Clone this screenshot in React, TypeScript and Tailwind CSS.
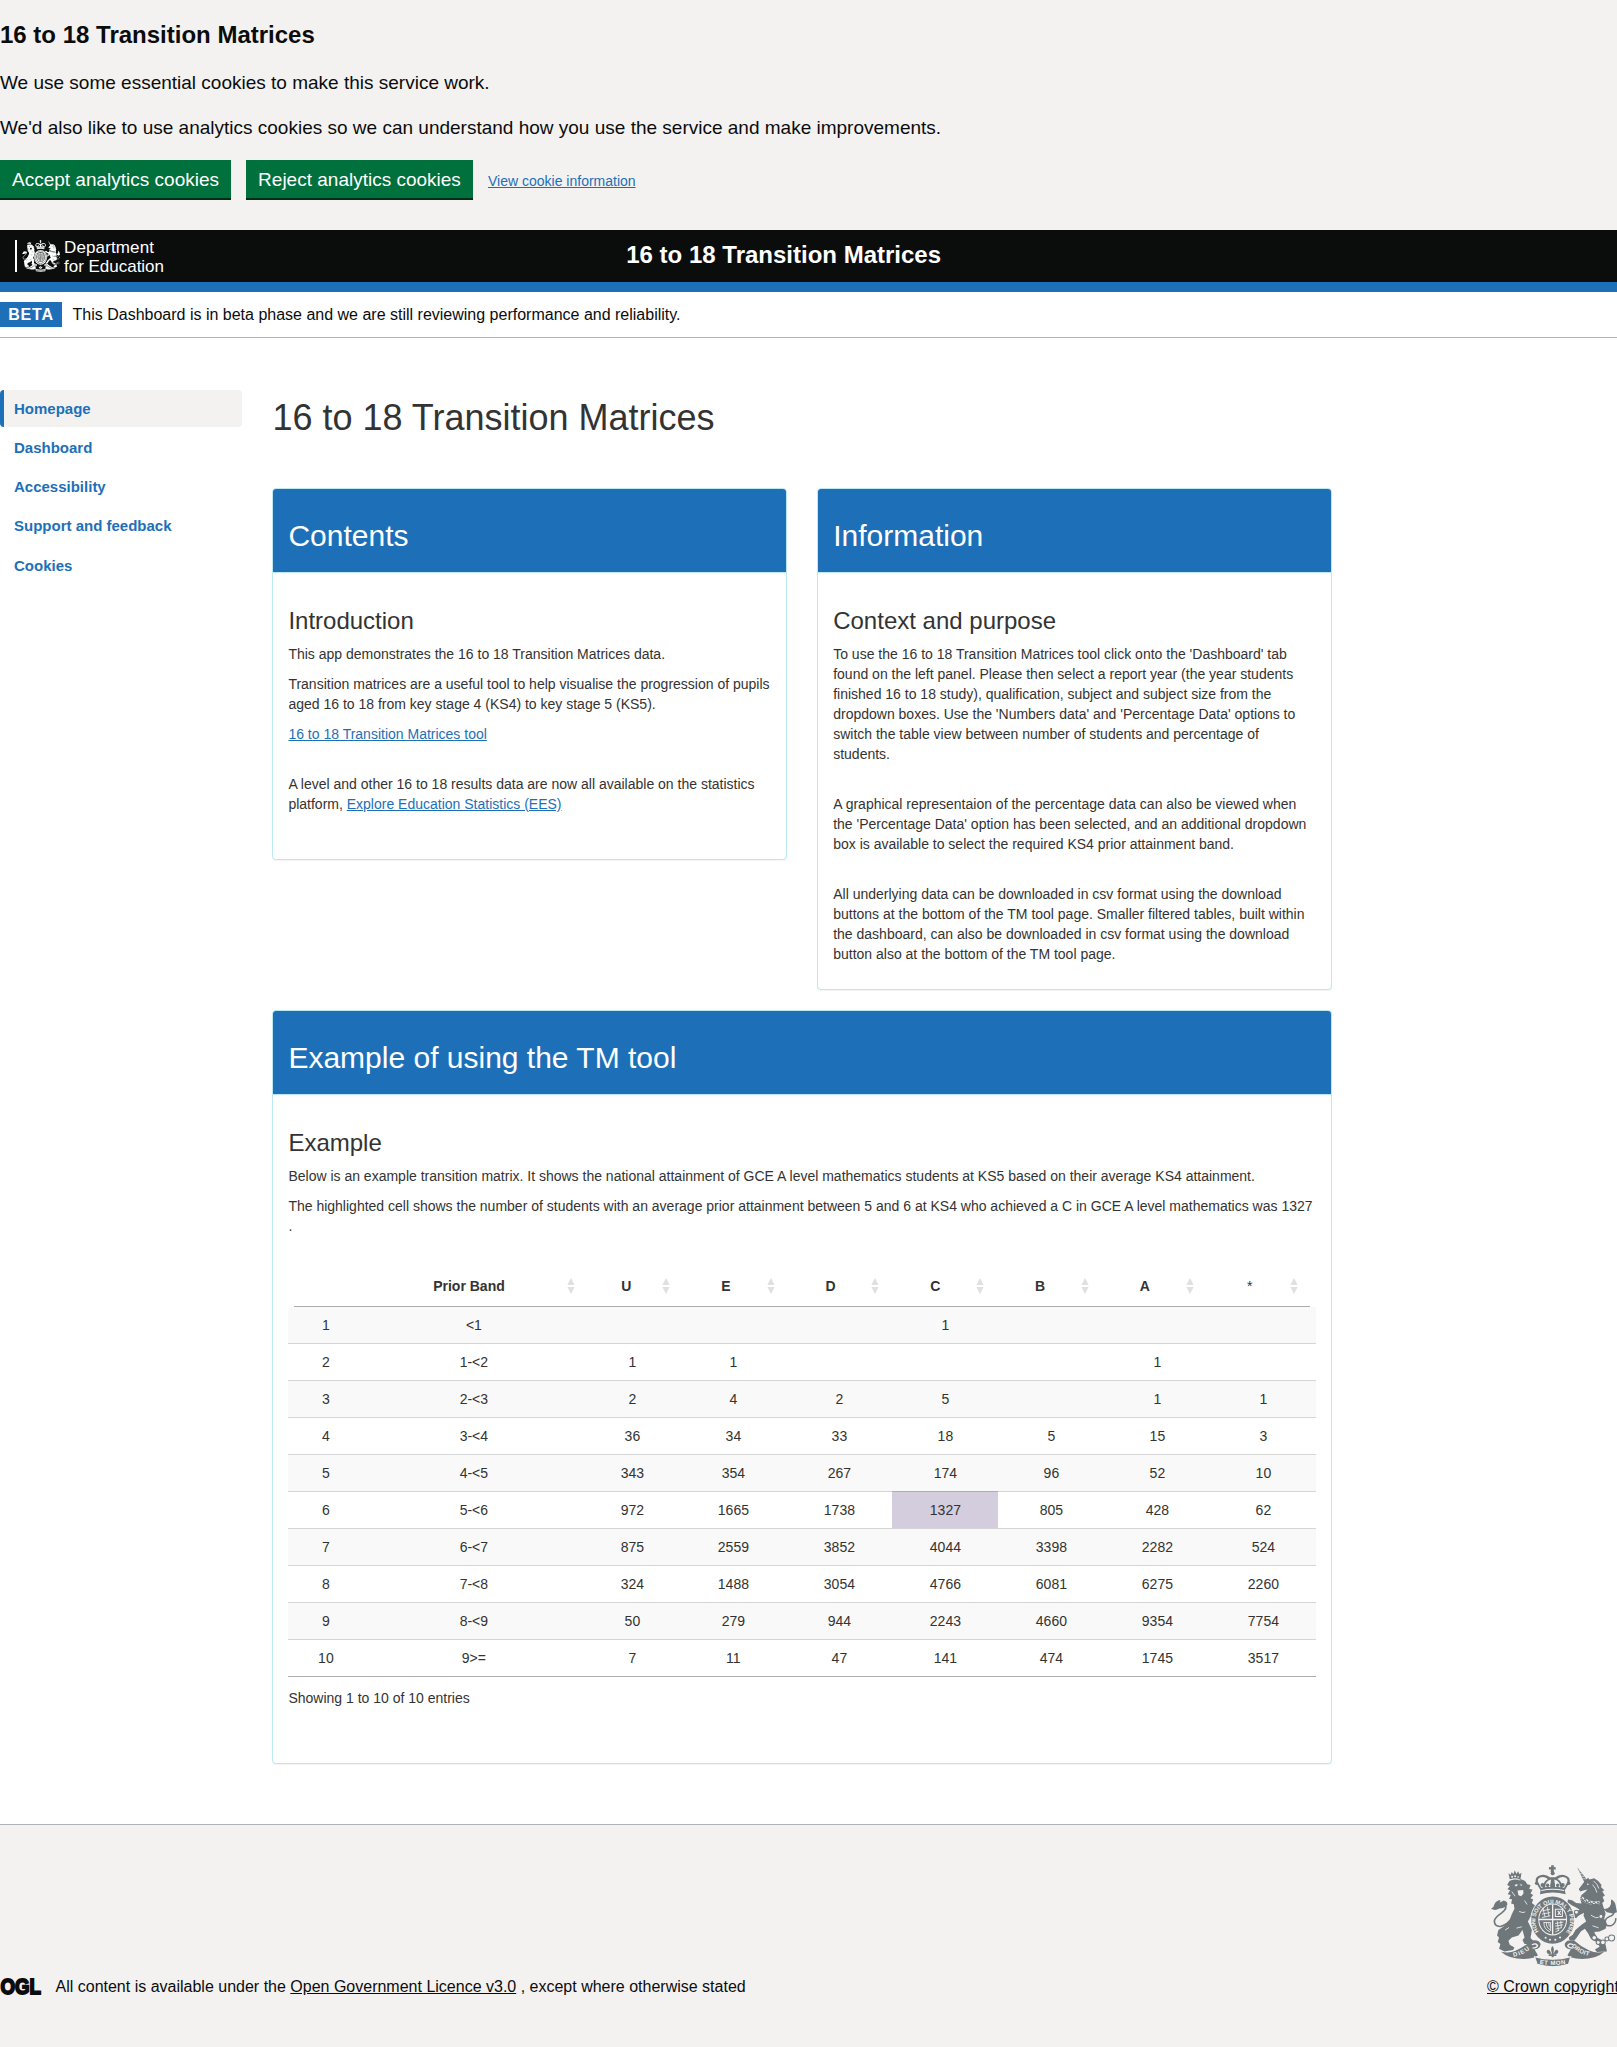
import React from 'react';

type CrestProps = { className: string; ink: string; paper: string; motto?: boolean };

function Crest({ className, ink, paper, motto = false }: CrestProps) {
  return (
    <svg className={className} viewBox="42 44 376 307" preserveAspectRatio="none" aria-hidden="true">
      <defs>
        <path id="garterArc" d="M185 244a52 52 0 1 1 82 0" />
        <path id="leftRibbon" d="M109 320q30 -4 54 -27" />
        <path id="rightRibbon" d="M282 289q26 26 60 29" />
        <path id="midRibbon" d="M187 341q38 8 80 0" />
      </defs>
      {/* lion */}
      <g fill={ink}>
        <path d="M94 68l6 6 4-9 5 7 4-12 5 11 5-8 4 9 6-5-3 20q-16-4-32 0z" />
        <path d="M97 92L90 104L98 108L91 117L99 120L92 132L101 134L96 146L105 147L102 160L110 162L112 176L104 192L98 208L84 226L64 240L60 256L66 262L62 276L70 282L66 296L82 304L108 300L112 292L98 284L94 272L104 262L124 256L136 240L142 262L136 270L142 282L164 282L170 274L160 264L164 240L158 226L152 214L160 200L168 206L182 204L188 196L178 188L166 180L172 172L178 170L164 158L168 148L160 144L168 134L160 130L166 118L156 116L160 104L150 102L144 92L130 86L112 86Z" />
        <path d="M42 176q9-4 10-13 4-12 18-14 1 5-3 8 8-1 12-6 12 2 12 12-8 12-24 12-12 8-25 1z" />
      </g>
      <path d="M84 162q8 12-10 26-20 14-22 24 0 18 18 17 20-4 36-26" fill="none" stroke={ink} strokeWidth="5" />
      <g fill={paper}>
        <path d="M112 104l9-3 0 5-5 3zM127 103l8 0-2 4zM121 121l17-2 1 11-7 8-8-3z" />
        <circle cx="105" cy="79" r="3" /><circle cx="114" cy="78" r="3" /><circle cx="123" cy="80" r="2.5" />
      </g>
      <path d="M98 88q15-4 32 1M104 124l10 14M142 151l8 12M126 184q14 6 18 1M84 240l12-8M118 234l16-4" stroke={paper} strokeWidth="2.5" fill="none" />
      {/* unicorn */}
      <path d="M299 51l33 42-10 6z" fill={ink} />
      <path d="M303 61l6 2m-2 6l7 2m-2 6l8 2m-3 6l8 1" stroke={paper} strokeWidth="2" />
      <g fill={ink}>
        <path d="M322 92L332 82L336 88L350 84L362 92L372 104L370 110L380 120L374 124L382 136L375 140L380 152L374 158L378 172L384 190L380 206L388 222L384 236L366 244L350 246L358 262L372 270L384 284L388 304L358 306L352 298L366 290L360 278L340 266L332 250L322 236L310 244L298 262L290 272L276 270L274 262L286 254L294 240L312 224L326 214L318 196L320 188L304 196L296 204L284 200L276 188L286 186L296 188L306 178L296 172L284 166L270 156L272 148L284 150L296 158L312 160L308 144L312 134L322 126L330 118L320 120L308 124L304 116L312 106Z" />
        <path d="M400 148q12 4 14 18l4 20-12 4-18-4-12-10q14 2 20-6 6-8 4-22z" />
      </g>
      <path d="M410 182q0 14-16 18-14 6-10 20 4 10 18 6 14-8 12-22" fill="none" stroke={ink} strokeWidth="4.5" />
      <path d="M310 143q28 20 56 15" fill="none" stroke={paper} strokeWidth="11" />
      <path d="M309 147q28 20 58 15M311 140l7 12 4-8 8 14 5-8 8 12 6-8 7 10 5-9 5 7" fill="none" stroke={ink} strokeWidth="3" />
      <circle cx="331" cy="102" r="2.5" fill={paper} />
      <path d="M348 92q12 9 16 23m-19-12q10 10 13 24m-18 68q13 12 29 6m-24 26l18 6" stroke={paper} strokeWidth="2.5" fill="none" />
      <g fill={paper} stroke={ink} strokeWidth="3">
        <circle cx="297" cy="186" r="6" /><circle cx="370" cy="199" r="6" />
        <circle cx="350" cy="263" r="7" /><circle cx="362" cy="277" r="6" />
        <circle cx="376" cy="277" r="7" /><circle cx="388" cy="267" r="6" /><circle cx="402" cy="264" r="9" />
      </g>
      {/* crown */}
      <g fill={ink}>
        <path d="M222 45h8l-1 6 6-1v8l-6-1 1 8h-10l1-8-6 1v-8l6 1z" />
        <circle cx="226" cy="69" r="6" />
        <path d="M188 132l2-12-13-22q-6-16 8-22 19-7 33 5h16q14-12 32-5 16 7 9 22l-13 22 3 12q-38-10-77 0z" />
      </g>
      <g fill={paper}>
        <path d="M183 97q-4-10 4-15 12-6 25 4-13 6-15 25l-5 2z" />
        <path d="M269 97q4-10-4-15-12-6-25 4 13 6 15 25l5 2z" />
        <path d="M221 88l-2 22q-11-2-16 2 1-20 18-24zM231 88l2 22q11-2 16 2-1-20-18-24z" />
      </g>
      <path d="M192 121q34-8 68 0" fill="none" stroke={paper} strokeWidth="3" />
      <g fill={ink}>
        <circle cx="178" cy="99" r="5" /><circle cx="196" cy="104" r="6" /><circle cx="211" cy="105" r="5" />
        <circle cx="226" cy="104" r="7" /><circle cx="241" cy="105" r="5" /><circle cx="256" cy="104" r="6" /><circle cx="274" cy="99" r="5" />
      </g>
      {/* garter and quartered shield */}
      <ellipse cx="226" cy="210" rx="67" ry="72" fill={paper} />
      <ellipse cx="226" cy="210" rx="64" ry="71" fill={ink} />
      <ellipse cx="226" cy="208" rx="43" ry="48" fill={paper} />
      <ellipse cx="226" cy="208" rx="40" ry="45" fill={ink} />
      <path d="M226 162v92M185 208h82" stroke={paper} strokeWidth="4" />
      <path d="M195 182l23-5m-24 15l25-5m-25 15l25-5m-22-24l6 27m7-30l5 28" stroke={paper} strokeWidth="2.5" />
      <path d="M234 177h21v22h-21zM241 182l9 12m0-12l-9 12" fill="none" stroke={paper} strokeWidth="3" />
      <path d="M200 216q-1 22 18 29m-11-29q0 18 12 23m-5-23q0 12 6 16M199 217h21v26" fill="none" stroke={paper} strokeWidth="2.5" />
      <path d="M233 220l25-4m-25 12l24-4m-23 13l18-4m-18 12l12-5m-6-26l3 27m7-29l2 22" stroke={paper} strokeWidth="2.5" />
      <g fill={paper}>
        <circle cx="205" cy="263" r="3" /><circle cx="218" cy="269" r="3" /><circle cx="234" cy="269" r="3" /><circle cx="248" cy="262" r="3" />
      </g>
      {motto ? (
        <text fill={paper} fontSize="17" fontWeight="700" fontFamily="Liberation Sans, sans-serif">
          <textPath href="#garterArc" textLength="235">HONI SOIT QUI MAL Y PENSE</textPath>
        </text>
      ) : (
        <ellipse cx="226" cy="209" rx="54" ry="59" fill="none" stroke={paper} strokeWidth="7" strokeDasharray="5 5" />
      )}
      {/* ribbon */}
      <path d="M72 305q24 6 43-3 26-11 46-30 22-5 29 9 1 10-9 15l-9 2 10 18-8 6q-37 11-75-1-15-5-27-16z" fill={ink} />
      <path d="M380 305q-24 6-43-3-26-11-46-30-22-5-29 9-1 10 9 15l9 2-10 18 8 6q37 11 75-1 15-5 27-16z" fill={ink} />
      <path d="M164 284q14-6 17 3-3 7-15 7M288 284q-14-6-17 3 3 7 15 7" fill="none" stroke={paper} strokeWidth="4" />
      <path d="M172 320q54 15 108 0l-7 23q-47 14-93 0z" fill={ink} stroke={paper} strokeWidth="3" />
      {/* plume above the centre scroll */}
      <path d="M205 292q42-7 42 0l2 29q-23 4-46 0z" fill={paper} />
      <path d="M225 288q9 9 1 24q-9-14-1-24zM222 310q-12 6-14-5 2-10 10-3zM229 310q12 6 14-5-2-10-10-3zM214 313h23v5h-23zM223 308h6v14h-6z" fill={ink} />
      {motto ? (
        <g fill={paper} fontSize="18" fontWeight="700" fontFamily="Liberation Sans, sans-serif">
          <text><textPath href="#leftRibbon" textLength="54">DIEU</textPath></text>
          <text><textPath href="#rightRibbon" textLength="60">DROIT</textPath></text>
          <text><textPath href="#midRibbon" textLength="78">ET MON</textPath></text>
        </g>
      ) : (
        <path d="M187 335q38 8 80 0M109 315q30-4 54-27M288 287q26 24 56 27" fill="none" stroke={paper} strokeWidth="8" strokeDasharray="6 4" />
      )}
    </svg>
  );
}

function Card({ title, heading, children }: { title: string; heading: string; children: React.ReactNode }) {
  return (
    <section className="rounded border border-[#bce8f1] bg-white shadow-[0_1px_1px_rgba(0,0,0,0.05)]">
      <div className="rounded-t-[3px] border-b border-[#bce8f1] bg-[#1d70b8] px-[15px] pt-[30px] pb-5">
        <h2 className="text-[30px] leading-[33px] text-white">{title}</h2>
      </div>
      <div className="px-[15px] pt-[35px] pb-[15px]">
        <h3 className="mb-[10px] h-[26px] text-2xl leading-[26px]">{heading}</h3>
        {children}
      </div>
    </section>
  );
}

const link = 'text-[#1d70b8] underline';

const grades = ['U', 'E', 'D', 'C', 'B', 'A', '*'];

const rows: string[][] = [
  ['1', '<1', '', '', '', '1', '', '', ''],
  ['2', '1-<2', '1', '1', '', '', '', '1', ''],
  ['3', '2-<3', '2', '4', '2', '5', '', '1', '1'],
  ['4', '3-<4', '36', '34', '33', '18', '5', '15', '3'],
  ['5', '4-<5', '343', '354', '267', '174', '96', '52', '10'],
  ['6', '5-<6', '972', '1665', '1738', '1327', '805', '428', '62'],
  ['7', '6-<7', '875', '2559', '3852', '4044', '3398', '2282', '524'],
  ['8', '7-<8', '324', '1488', '3054', '4766', '6081', '6275', '2260'],
  ['9', '8-<9', '50', '279', '944', '2243', '4660', '9354', '7754'],
  ['10', '9>=', '7', '11', '47', '141', '474', '1745', '3517'],
];

function SortHeader({ label }: { label: string }) {
  return (
    <div className="flex h-5 items-center pr-[11.5px] pl-[10px] font-bold">
      <span className={`flex-1 pr-[6.5px] text-center ${label === '*' ? 'font-normal' : ''}`}>{label}</span>
      <svg className="h-4 w-2" viewBox="0 0 8 16" fill="#e0e0e0">
        <path d="M4 0L7.6 7H.4zM4 16L7.6 9H.4z" />
      </svg>
    </div>
  );
}

function MatrixTable() {
  return (
    <div className="mt-10">
      <div className="mr-[6px] ml-[5.600px] grid grid-cols-[73px_220px_94.5px_repeat(6,104.75px)] border-b border-[#adadad] pb-[10px]">
        <div />
        <SortHeader label="Prior Band" />
        {grades.map((g) => (
          <SortHeader key={g} label={g} />
        ))}
      </div>
      <div className="border-b border-[#adadad]">
        {rows.map((row, r) => (
          <div
            key={row[0]}
            className={`grid grid-cols-[75px_221px_96px_repeat(6,106px)] text-center ${r % 2 === 0 ? 'bg-[#f9f9f9]' : ''} ${r > 0 ? 'border-t border-[#d5d5d5]' : ''}`}
          >
            {row.map((cell, c) => (
              <div key={c} className={`h-9 py-2 ${r === 5 && c === 5 ? '-mt-px h-[37px] border-t border-[#b2aabc] bg-[#d4cddd]' : ''}`}>
                {cell}
              </div>
            ))}
          </div>
        ))}
      </div>
      <p className="pt-[11px]">Showing 1 to 10 of 10 entries</p>
    </div>
  );
}

const nav = ['Homepage', 'Dashboard', 'Accessibility', 'Support and feedback', 'Cookies'];

export default function App() {
  return (
    <div className="flex h-[2047px] w-full flex-col overflow-hidden bg-white font-['Liberation_Sans',Arial,sans-serif] text-sm leading-5 text-[#333]">
      <div className="h-[230px] bg-[#f3f2f1] pt-5 text-[19px] leading-[25px] text-[#0b0c0c]">
        <h2 className="mb-5 text-2xl leading-[30px] font-bold">16 to 18 Transition Matrices</h2>
        <p className="mb-5">We use some essential cookies to make this service work.</p>
        <p className="mb-5">We'd also like to use analytics cookies so we can understand how you use the service and make improvements.</p>
        <div className="flex items-center gap-[15px]">
          <button className="h-10 w-[231px] border-b-2 border-[#002d18] bg-[#00703c] text-[19px] leading-[19px] whitespace-nowrap text-white">Accept analytics cookies</button>
          <button className="h-10 w-[227px] border-b-2 border-[#002d18] bg-[#00703c] text-[19px] leading-[19px] whitespace-nowrap text-white">Reject analytics cookies</button>
          <a href="#" className={`${link} pt-[2px] text-sm leading-5`}>View cookie information</a>
        </div>
      </div>

      <header className="flex h-[62px] border-b-[10px] border-[#1d70b8] bg-[#0b0c0c] text-white">
        <div className="flex w-[626.250px] pt-[10px] pl-[15px]">
          <div className="h-8 w-[2px] bg-white" />
          <Crest className="ml-[5px] h-8 w-[38px]" ink="#ffffff" paper="#0b0c0c" />
          <svg className="ml-1 h-9 w-[110px] overflow-visible" viewBox="0 0 110 36" fill="#fff" fontFamily="Liberation Sans, sans-serif" fontSize="17">
            <text x="0" y="13" textLength="90">Department</text>
            <text x="0" y="31.500" textLength="100">for Education</text>
          </svg>
        </div>
        <h1 className="pt-[10px] text-2xl leading-[30px] font-bold whitespace-nowrap">16 to 18 Transition Matrices</h1>
      </header>

      <div className="flex h-[46px] items-start border-b border-[#b1b4b6] pt-[10px] text-base text-[#0b0c0c]">
        <strong className="mr-[10.5px] h-[25px] w-[62px] bg-[#1d70b8] text-center leading-[25px] tracking-[0.8px] text-white">BETA</strong>
        <span className="leading-[26px]">This Dashboard is in beta phase and we are still reviewing performance and reliability.</span>
      </div>

      <div className="flex grow">
        <nav className="flex w-[242px] flex-col gap-[2px] pt-[52px] text-[15px] font-bold text-[#1d70b8]">
          {nav.map((item, i) => (
            <a
              key={item}
              href="#"
              className={`h-[37px] rounded border-l-4 pl-[10px] ${i === 0 ? 'border-[#1d70b8] bg-[#f3f2f1]' : 'border-transparent'} ${i === 4 ? 'leading-10' : 'leading-[38px]'}`}
            >
              {item}
            </a>
          ))}
        </nav>

        <main className="ml-[30.400px] w-[1059.600px] pt-[60px]">
          <h1 className="mb-[50px] text-4xl leading-10">16 to 18 Transition Matrices</h1>
          <div className="mb-5 grid grid-cols-2 items-start gap-[30px]">
            <Card title="Contents" heading="Introduction">
              <p className="mb-[10px]">This app demonstrates the 16 to 18 Transition Matrices data.</p>
              <p className="mb-[10px]">Transition matrices are a useful tool to help visualise the progression of pupils aged 16 to 18 from key stage 4 (KS4) to key stage 5 (KS5).</p>
              <p className="mb-[30px]"><a href="#" className={link}>16 to 18 Transition Matrices tool</a></p>
              <p className="mb-[30px]">
                A level and other 16 to 18 results data are now all available on the statistics platform, <a href="#" className={link}>Explore Education Statistics (EES)</a>
              </p>
            </Card>
            <Card title="Information" heading="Context and purpose">
              <p className="mb-[30px]">To use the 16 to 18 Transition Matrices tool click onto the 'Dashboard' tab found on the left panel. Please then select a report year (the year students finished 16 to 18 study), qualification, subject and subject size from the dropdown boxes. Use the 'Numbers data' and 'Percentage Data' options to switch the table view between number of students and percentage of students.</p>
              <p className="mb-[30px]">A graphical representaion of the percentage data can also be viewed when the 'Percentage Data' option has been selected, and an additional dropdown box is available to select the required KS4 prior attainment band.</p>
              <p className="mb-[10px]">All underlying data can be downloaded in csv format using the download buttons at the bottom of the TM tool page. Smaller filtered tables, built within the dashboard, can also be downloaded in csv format using the download button also at the bottom of the TM tool page.</p>
            </Card>
          </div>
          <div className="h-[754px] *:h-full">
            <Card title="Example of using the TM tool" heading="Example">
              <p className="mb-[10px]">Below is an example transition matrix. It shows the national attainment of GCE A level mathematics students at KS5 based on their average KS4 attainment.</p>
              <p>The highlighted cell shows the number of students with an average prior attainment between 5 and 6 at KS4 who achieved a C in GCE A level mathematics was 1327<br />.</p>
              <MatrixTable />
            </Card>
          </div>
        </main>
      </div>

      <footer className="flex h-[223px] items-start justify-between border-t border-[#b1b4b6] bg-[#f3f2f1] text-base leading-5 whitespace-nowrap text-[#0b0c0c]">
        <div className="flex items-center pt-[152px]">
          <svg className="mr-[14.5px] h-5 w-[41px] overflow-visible" viewBox="0 0 41 20">
            <text x="0.5" y="16.500" fontFamily="Liberation Sans, sans-serif" fontWeight="700" fontSize="21.500" textLength="40.500" lengthAdjust="spacingAndGlyphs" fill="#0b0c0c" stroke="#0b0c0c" strokeWidth="1.800">OGL</text>
          </svg>
          <p>All content is available under the <a href="#" className="underline">Open Government Licence v3.0</a> , except where otherwise stated</p>
        </div>
        <div className="w-[130px] pt-10">
          <Crest className="ml-1 h-[102px] w-[126px]" ink="#6f777b" paper="#f3f2f1" motto />
          <a href="#" className="mt-[10px] block underline">© Crown copyright</a>
        </div>
      </footer>
    </div>
  );
}
